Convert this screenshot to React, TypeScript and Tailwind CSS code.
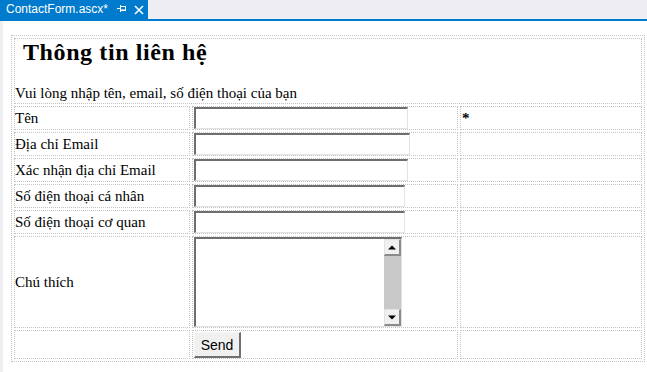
import React from "react";

function TextBox({ w }: { w: string }) {
  return (
    <div
      className={`${w} h-[22px] bg-white border-t-2 border-l-2 border-t-[#6e6e6e] border-l-[#6e6e6e] border-r border-b border-r-[#e3e3e3] border-b-[#e3e3e3]`}
    />
  );
}

function ScrollBtn({ up }: { up: boolean }) {
  return (
    <div className="h-[17px] w-[17px] bg-[#f0f0f0] border-t border-l border-t-[#e3e3e3] border-l-[#e3e3e3] border-r-2 border-b-2 border-r-[#8a8a8a] border-b-[#8a8a8a] flex items-center justify-center">
      <svg width="8" height="5" viewBox="0 0 8 5">
        {up ? <polygon points="0,4.5 8,4.5 4,0.5" fill="#000" /> : <polygon points="0,0.5 8,0.5 4,4.5" fill="#000" />}
      </svg>
    </div>
  );
}

const cell = "border border-dotted border-[#c3c3c3] p-0";

export default function App() {
  const rows: { label: string; w: string; star?: boolean }[] = [
    { label: "Tên", w: "w-[214px]", star: true },
    { label: "Địa chỉ Email", w: "w-[216px]" },
    { label: "Xác nhận địa chỉ Email", w: "w-[214px]" },
    { label: "Số điện thoại cá nhân", w: "w-[211px]" },
    { label: "Số điện thoại cơ quan", w: "w-[211px]" },
  ];
  return (
    <div className="w-[647px] h-[372px] bg-white overflow-hidden flex flex-col">
      <div className="h-[19px] bg-[#eeeef2] flex shrink-0">
        <div className="w-[148px] bg-[#007acc] flex items-center text-white font-['Liberation_Sans',sans-serif] text-[12px] leading-[19px]">
          <span className="pl-[6px] w-[117px] shrink-0">ContactForm.ascx*</span>
          <svg width="10" height="8" viewBox="0 0 10 8" className="mt-[-1px] shrink-0">
            <line x1="0" y1="3.5" x2="3" y2="3.5" stroke="#fff" strokeWidth="1" />
            <line x1="3.5" y1="0" x2="3.5" y2="7" stroke="#fff" strokeWidth="1" />
            <rect x="3.5" y="1.5" width="5" height="4" fill="none" stroke="#fff" strokeWidth="1" />
            <line x1="3.5" y1="5" x2="8.5" y2="5" stroke="#fff" strokeWidth="1" />
          </svg>
          <svg width="10" height="10" viewBox="0 0 10 10" className="ml-[7px] shrink-0">
            <path d="M1 1 L9 9 M9 1 L1 9" stroke="#fff" strokeWidth="1.6" />
          </svg>
        </div>
      </div>
      <div className="h-[2px] bg-[#007acc] shrink-0" />
      <div className="flex flex-1">
        <div className="w-[3px] bg-[#eeeef2]" />
        <div className="pl-[8px] pt-[14px] font-['Liberation_Serif',serif] text-[15px] text-black">
          <table className="table-fixed w-[634px] border-separate border-spacing-[2px] border border-dotted border-[#c3c3c3]">
            <colgroup>
              <col className="w-[176px]" />
              <col className="w-[266px]" />
              <col className="w-[182px]" />
            </colgroup>
            <tbody>
              <tr>
                <td colSpan={3} className={`${cell} align-top pb-px`}>
                  <h2 className="pl-[8px] text-[24px] font-bold leading-[27px] mb-[19px] tracking-[0.6px]">Thông tin liên hệ</h2>
                  <p className="leading-[17px]">Vui lòng nhập tên, email, số điện thoại của bạn</p>
                </td>
              </tr>
              {rows.map((r) => (
                <tr key={r.label}>
                  <td className={`${cell} h-[24px] align-middle leading-[17px] whitespace-nowrap`}>{r.label}</td>
                  <td className={`${cell} h-[24px] align-middle pl-px`}>
                    <TextBox w={r.w} />
                  </td>
                  <td className={`${cell} h-[24px] align-middle pl-px leading-[17px] font-bold`}>{r.star ? "*" : ""}</td>
                </tr>
              ))}
              <tr>
                <td className={`${cell} align-middle leading-[17px]`}>Chú thích</td>
                <td className={`${cell} align-middle pl-px`}>
                  <div className="w-[208px] h-[90px] bg-white border-t-2 border-l-2 border-t-[#6e6e6e] border-l-[#6e6e6e] border-r border-b border-r-[#e3e3e3] border-b-[#e3e3e3] flex justify-end">
                    <div className="w-[17px] flex flex-col">
                      <ScrollBtn up={true} />
                      <div className="flex-1 bg-[#c8c8c8]" />
                      <ScrollBtn up={false} />
                    </div>
                  </div>
                </td>
                <td className={cell}></td>
              </tr>
              <tr>
                <td className={cell}></td>
                <td className={`${cell} align-middle pl-px pt-px`}>
                  <div className="w-[47px] h-[26px] bg-[#f0f0f0] border-t border-l border-t-[#f8f8f8] border-l-[#f8f8f8] border-r-2 border-b-2 border-r-[#707070] border-b-[#707070] flex items-center justify-center font-['Liberation_Sans',sans-serif] text-[14px] leading-none">
                    Send
                  </div>
                </td>
                <td className={cell}></td>
              </tr>
            </tbody>
          </table>
        </div>
      </div>
    </div>
  );
}
